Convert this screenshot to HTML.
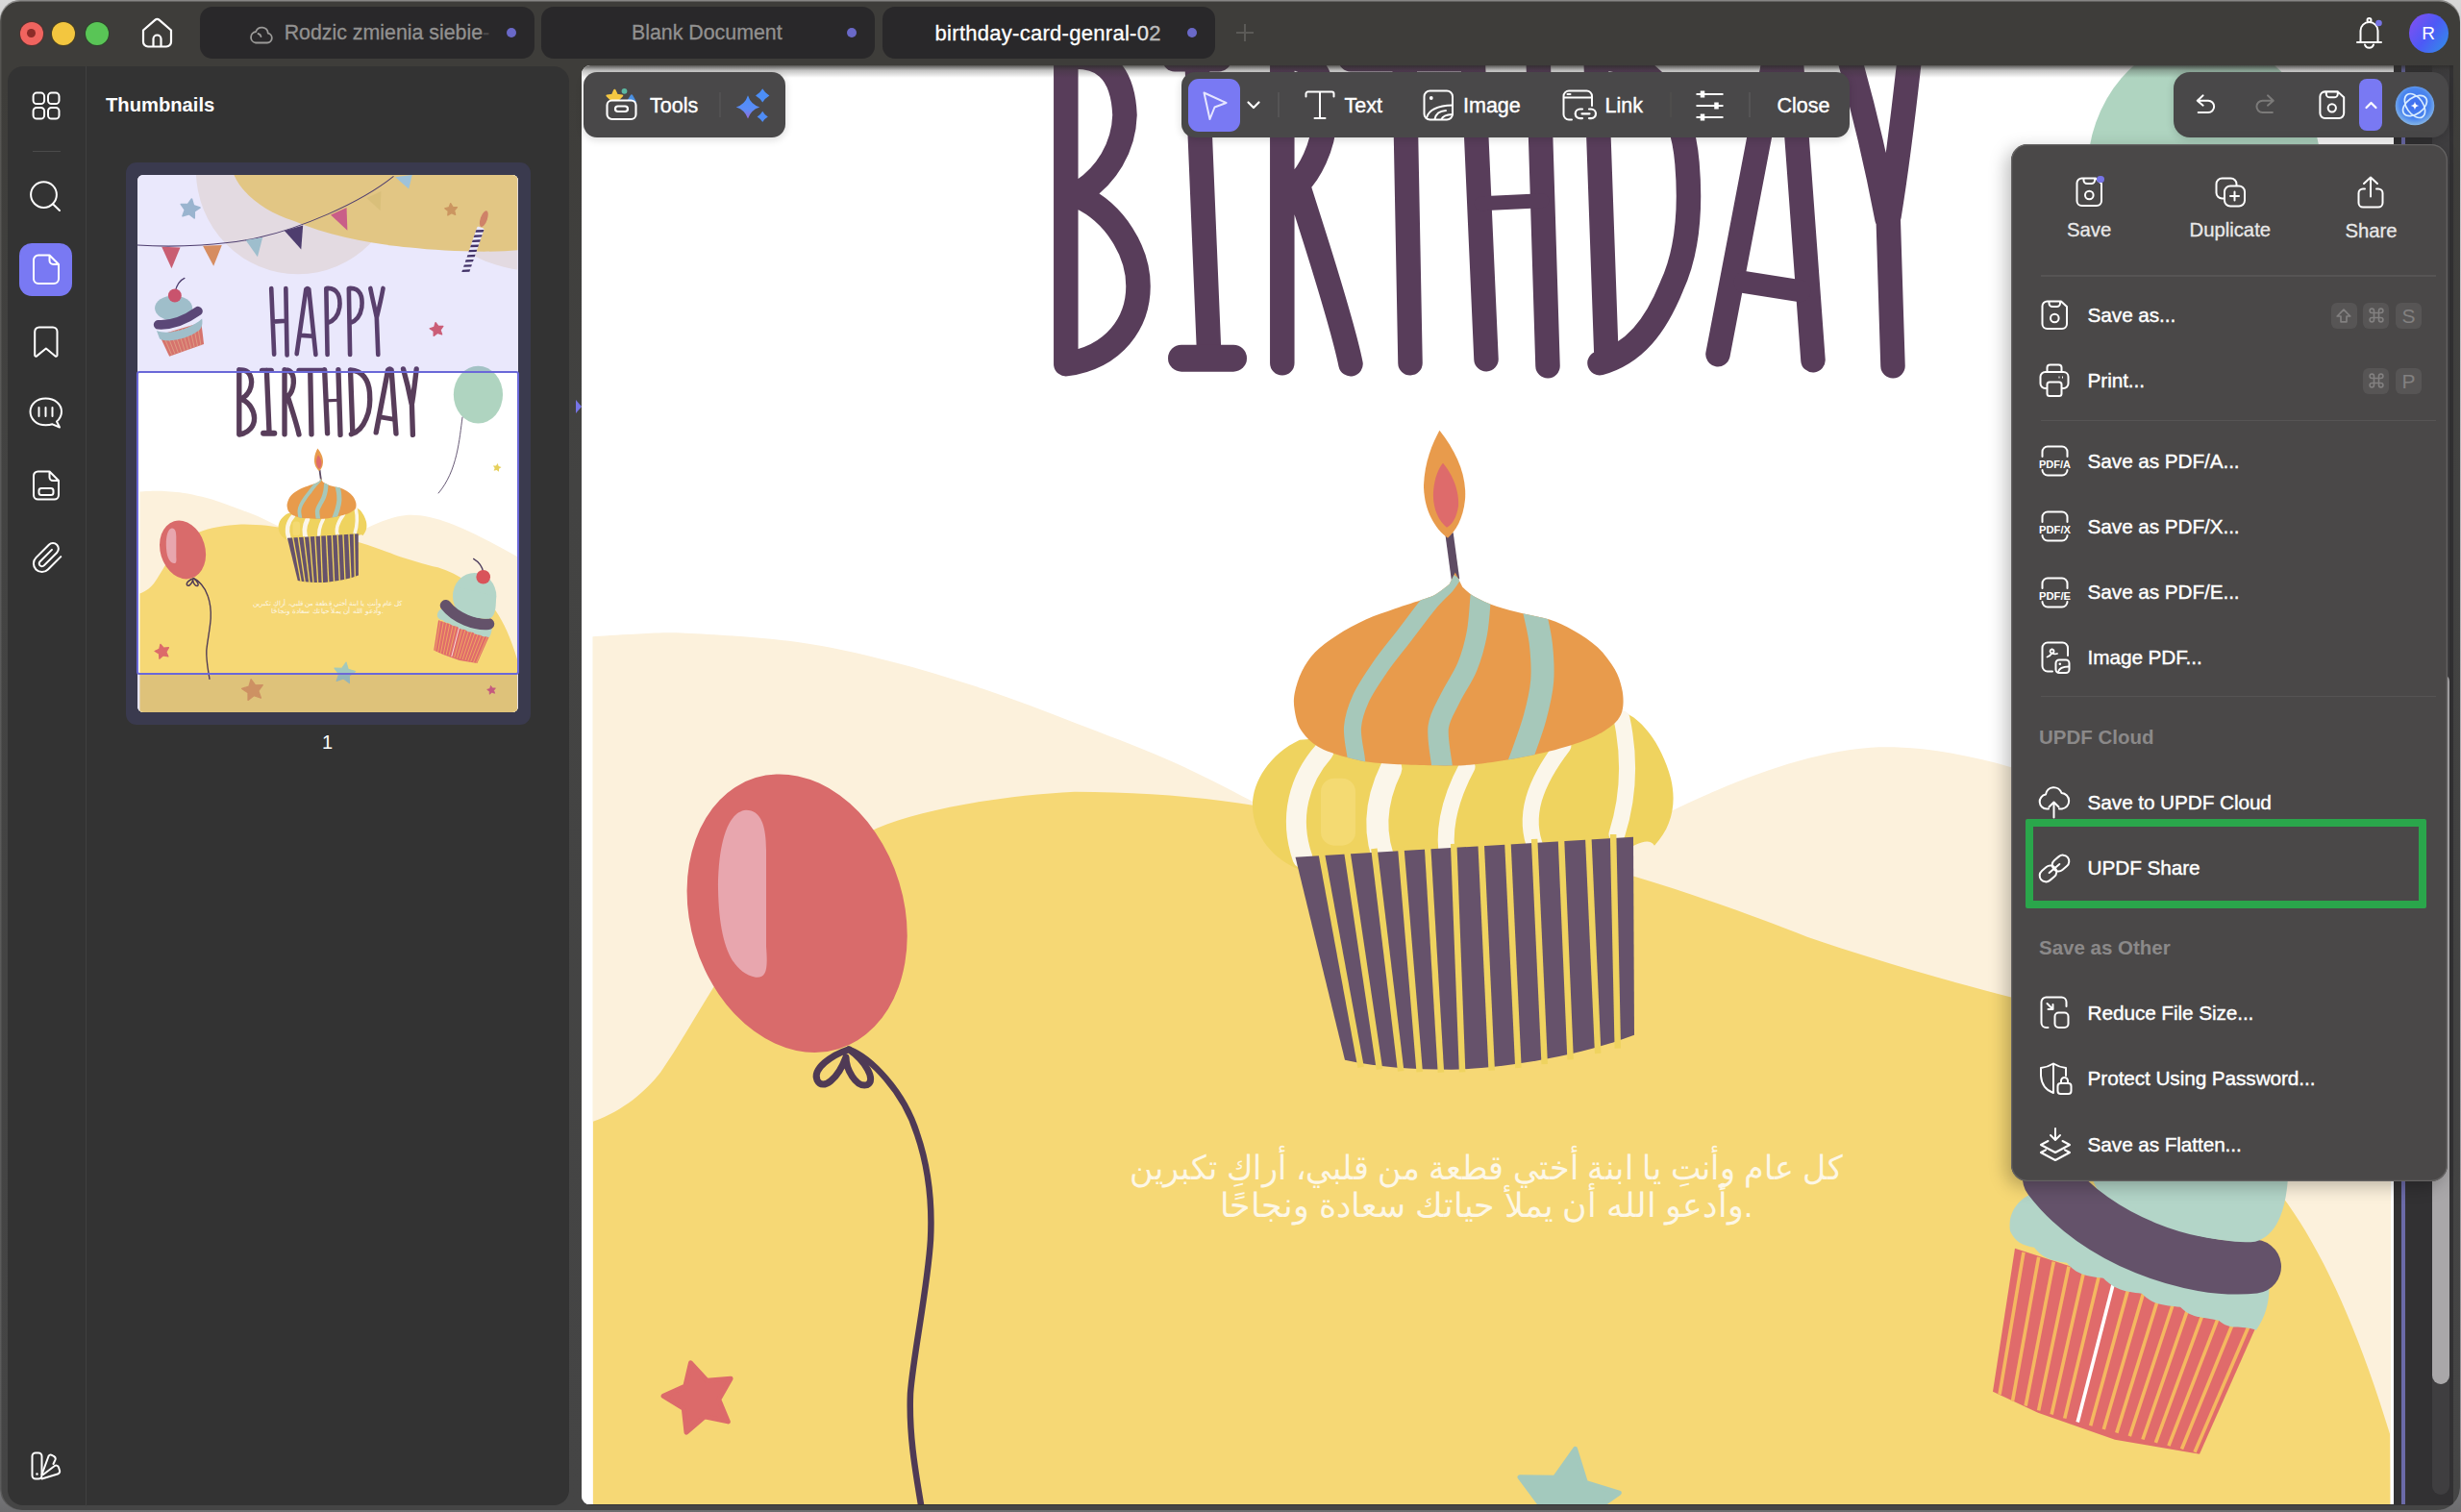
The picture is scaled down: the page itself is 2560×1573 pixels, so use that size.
<!DOCTYPE html>
<html lang="en">
<head>
<meta charset="utf-8">
<title>UPDF - birthday-card-genral-02</title>
<style>
*{box-sizing:border-box;margin:0;padding:0}
html,body{width:2560px;height:1573px;overflow:hidden;background:linear-gradient(#d8d8d8 0,#cfcfd2 40px,#8f8f93 1500px,#6c6c6e 1573px);font-family:"Liberation Sans",sans-serif;}
#win{position:absolute;left:0;top:0;width:2559px;height:1570.5px;background:linear-gradient(#3e3d3a 0,#3e3d3a 90px,#434342 500px,#454545 1573px);border-radius:21px 22px 24px 22px;overflow:hidden;box-shadow:inset 0 1.5px 0 rgba(255,255,255,.38), inset 1.5px 0 0 rgba(255,255,255,.12)}
.abs{position:absolute}
i{display:block}
svg{position:absolute;overflow:visible}
.ic{fill:none;stroke:#fff;stroke-width:2;stroke-linecap:round;stroke-linejoin:round}
.tl{position:absolute;top:22.6px;width:24px;height:24px;border-radius:50%}
.tab{position:absolute;top:7px;height:54px;border-radius:13px;background:#29282a;color:#929190;font-size:21.35px;line-height:55.5px;-webkit-text-stroke:.3px #929190;white-space:nowrap}
.tab .dot{position:absolute;top:22px;width:10px;height:10px;border-radius:50%;background:#6a69c8}
.tab span.t{position:absolute;top:0}
#side{position:absolute;left:8px;top:68.5px;width:584.3px;height:1497px;background:#333333;border-radius:16px}
#doc{position:absolute;left:605px;top:68px;width:1947px;height:1498px;background:#323133;overflow:hidden;border-radius:9px 0 0 10px}
#page{position:absolute;left:0;top:0;width:1885px;height:1497px;background:#fff;overflow:hidden}
.tb{position:absolute;background:#494849;border-radius:14px;box-shadow:0 2px 8px rgba(0,0,0,.16)}
.tbt{position:absolute;color:#fff;font-size:21.5px;line-height:28px;white-space:nowrap;-webkit-text-stroke:.4px #fff}
#dd{position:absolute;left:2092px;top:150px;width:454px;height:1079px;background:#4a4848;border-radius:17px;box-shadow:0 0 0 1.3px #646262 inset, -5px 5px 18px rgba(0,0,0,.26)}
.mi{position:absolute;left:79.6px;color:#fff;font-size:20.8px;letter-spacing:-.1px;line-height:28px;white-space:nowrap;-webkit-text-stroke:.4px #fff}
.mh{position:absolute;left:29px;color:#8b8989;font-size:20.5px;font-weight:bold;line-height:28px;white-space:nowrap}
.sep{position:absolute;left:31px;width:411px;height:1.5px;background:#565454}
.key{position:absolute;width:27px;height:27px;border-radius:6px;background:#575555;color:#828080;font-size:21px;line-height:27px;text-align:center}
.top3{position:absolute;width:140px;text-align:center;color:#e9e8e8;font-size:20.3px;line-height:26px;white-space:nowrap;-webkit-text-stroke:.3px #e9e8e8}
</style>
</head>
<body>
<svg width="0" height="0" style="position:absolute"><defs><symbol id="card" viewBox="605 -906.7 1885 2663" preserveAspectRatio="none">
<rect x="605" y="-907" width="1885" height="2664" fill="#fff"/>
<ellipse cx="1400" cy="-930" rx="505" ry="515" fill="#f7efe0"/>
<path d="M2248 -520 C2330 -470 2420 -450 2490 -436 V-907 H2200 Z" fill="#f7efe0"/>
<path d="M1083 -907 C1130 -800 1250 -720 1375 -680 C1560 -600 1800 -560 1957 -547 C2100 -530 2350 -520 2490 -534 V-907 Z" fill="#f6d875"/>
<path d="M605 -559 C800 -545 1050 -560 1208 -597 C1400 -640 1700 -760 1874 -900" fill="none" stroke="#4b3a5c" stroke-width="5"/>
<polygon points="725,-551 817,-547 774,-443" fill="#d96060"/>
<polygon points="929,-555 1023,-559 982,-455" fill="#e8964c"/>
<polygon points="1141,-584 1225,-597 1200,-501" fill="#a8cfc9"/>
<polygon points="1333,-630 1425,-657 1416,-538" fill="#4b3a5c"/>
<polygon points="1562,-709 1641,-745 1645,-632" fill="#d9607a"/>
<polygon points="1740,-792 1812,-826 1808,-730" fill="#ecd06a"/>
<polygon points="1882,-896 1966,-907 1949,-838" fill="#a8d4d8"/>
<polygon points="873.7,-787.2 883.0,-755.4 914.5,-745.0 887.1,-726.3 886.9,-693.1 860.7,-713.4 829.0,-703.3 840.2,-734.5 820.9,-761.5 854.0,-760.5" fill="#a3c3cb" stroke="#a3c3cb" stroke-width="8" stroke-linejoin="round"/>
<polygon points="2156.2,-765.9 2167.2,-747.7 2188.5,-746.5 2174.6,-730.4 2180.0,-709.8 2160.4,-718.1 2142.5,-706.6 2144.3,-727.7 2127.8,-741.2 2148.5,-746.1" fill="#dca04c" stroke="#dca04c" stroke-width="6" stroke-linejoin="round"/>
<polygon points="2081.9,-175.5 2095.7,-156.7 2118.9,-157.4 2105.3,-138.6 2113.2,-116.7 2091.0,-123.8 2072.7,-109.5 2072.5,-132.8 2053.3,-145.9 2075.4,-153.2" fill="#dc5f66" stroke="#dc5f66" stroke-width="6" stroke-linejoin="round"/>
<g transform="translate(2269,-538) rotate(19)"><rect x="-18" y="-115" width="36" height="230" rx="6" fill="#fff"/><path d="M-18 -95 L18 -109 V-97 L-18 -83 Z" fill="#3f2f55"/><path d="M-18 -69 L18 -83 V-71 L-18 -57 Z" fill="#3f2f55"/><path d="M-18 -43 L18 -57 V-45 L-18 -31 Z" fill="#3f2f55"/><path d="M-18 -17 L18 -31 V-19 L-18 -5 Z" fill="#3f2f55"/><path d="M-18 9 L18 -5 V7 L-18 21 Z" fill="#3f2f55"/><path d="M-18 35 L18 21 V33 L-18 47 Z" fill="#3f2f55"/><path d="M-18 61 L18 47 V59 L-18 73 Z" fill="#3f2f55"/><path d="M-18 87 L18 73 V85 L-18 99 Z" fill="#3f2f55"/><path d="M-18 113 L18 99 V111 L-18 125 Z" fill="#3f2f55"/><ellipse cx="0" cy="-160" rx="17" ry="42" fill="#e08a55"/></g>
<path d="M792 -330 C800 -360 815 -385 838 -395" fill="none" stroke="#4b3a5c" stroke-width="6" stroke-linecap="round"/>
<polygon points="713,-114 921,-176 934,-68 763,-8" fill="#e8795a"/>
<line x1="730" y1="-119" x2="775" y2="-14" stroke="#f2b07a" stroke-width="4"/><line x1="749" y1="-124" x2="791" y2="-19" stroke="#f2b07a" stroke-width="4"/><line x1="768" y1="-130" x2="807" y2="-25" stroke="#f2b07a" stroke-width="4"/><line x1="787" y1="-135" x2="823" y2="-30" stroke="#f2b07a" stroke-width="4"/><line x1="806" y1="-141" x2="839" y2="-36" stroke="#f2b07a" stroke-width="4"/><line x1="825" y1="-147" x2="855" y2="-41" stroke="#f2b07a" stroke-width="4"/><line x1="844" y1="-152" x2="871" y2="-47" stroke="#f2b07a" stroke-width="4"/><line x1="863" y1="-158" x2="887" y2="-52" stroke="#f2b07a" stroke-width="4"/><line x1="882" y1="-163" x2="903" y2="-58" stroke="#f2b07a" stroke-width="4"/><line x1="901" y1="-169" x2="919" y2="-63" stroke="#f2b07a" stroke-width="4"/>
<path d="M700 -135 C760 -110 880 -150 925 -195 C930 -160 920 -140 900 -130 C860 -100 760 -70 715 -95 Z" fill="#a9cfc6"/>
<ellipse cx="784" cy="-247" rx="93" ry="62" fill="#a9cfc6"/>
<path d="M708 -165 C790 -160 860 -200 905 -232" fill="none" stroke="#5a4666" stroke-width="46" stroke-linecap="round"/>
<circle cx="790" cy="-309" r="33" fill="#d9545a"/>
<g fill="none" stroke="#583d5a" stroke-width="22" stroke-linecap="round" stroke-linejoin="round">
<path d="M1268 -345 L1282 -18 M1340 -345 L1346 -14 M1275 -180 L1343 -184"/>
<path d="M1394 -20 L1440 -340 Q1447 -348 1454 -340 L1488 -16 M1418 -112 L1474 -108"/>
<path d="M1546 -16 L1540 -345 C1600 -350 1612 -300 1606 -250 C1598 -200 1570 -180 1544 -172"/>
<path d="M1658 -16 L1652 -345 C1712 -350 1722 -300 1716 -250 C1708 -200 1682 -180 1656 -172"/>
<path d="M1759 -345 C1770 -290 1782 -240 1790 -200 M1822 -345 C1812 -290 1800 -240 1790 -200 L1797 -16"/>
</g>
<ellipse cx="2293" cy="182" rx="122" ry="142" fill="#afd4c0"/>
<path d="M2215 292 C2200 400 2190 560 2095 671" fill="none" stroke="#4b3a5c" stroke-width="4"/>
<polygon points="2389.8,522.3 2393.9,536.4 2407.8,540.9 2395.7,549.2 2395.6,563.8 2384.1,554.8 2370.2,559.3 2375.1,545.5 2366.6,533.7 2381.2,534.1" fill="#e6d05c"/>
<path d="M616.5 662.5 C623.8 662.1 643.8 660.6 660.0 660.0 C676.2 659.4 686.0 657.7 714.0 659.0 C742.0 660.3 792.8 663.2 828.0 668.0 C863.2 672.8 892.5 679.8 925.0 688.0 C957.5 696.2 990.5 706.2 1023.0 717.0 C1055.5 727.8 1087.5 740.5 1120.0 753.0 C1152.5 765.5 1188.2 778.8 1218.0 792.0 C1247.8 805.2 1278.7 821.3 1299.0 832.0 C1319.3 842.7 1333.2 852.0 1340.0 856.0 L1690 868 C1740 843 1850 785 1946 778 C2100 770 2300 880 2490 986 V1757 H616.5 Z" fill="#fcf1dc"/>
<path d="M617 1167 C650 1155 672 1135 687 1116 C705 1090 725 1055 740 1031 C790 950 850 890 912 862 C960 842 1040 828 1118 824 C1200 824 1280 832 1340 845 L1700 912 C1760 930 1830 955 1880 975 C1950 999 2030 1022 2093 1038 C2220 1075 2320 1170 2380 1253 C2420 1310 2455 1390 2486 1492 L2487 1757 H617 Z" fill="#f6d875"/>
<rect x="2487" y="-907" width="3" height="2664" fill="#fff"/>
<g fill="none" stroke="#583d5a" stroke-width="25.5" stroke-linecap="round" stroke-linejoin="round">
<path d="M1108.8 58 V378 M1108.8 60 C1145 56 1168 72 1170 120 C1169 155 1150 183 1126 199 M1123 205 C1160 222 1184 262 1184 298 C1184 335 1160 372 1108.8 379"/>
<path d="M1245 62 L1257.6 366"/><path d="M1229 373 H1283" stroke-width="28"/><path d="M1222 62 H1268"/>
<path d="M1333.8 58 V378 M1334 60 C1372 58 1380 90 1378 125 C1376 155 1362 180 1350 192 C1365 240 1395 330 1405 379"/>
<path d="M1461 62 L1467 378 M1405 62 H1520"/>
<path d="M1532 58 L1546 374 M1600 58 L1610 381"/><path d="M1541 212 L1604 209" stroke-width="15"/>
<path d="M1660 60 L1671 372 M1660 60 C1720 62 1750 110 1755 170 C1760 230 1752 270 1739 298 C1722 340 1700 368 1664 378"/>
<path d="M1787 369 L1846 60 Q1855 52 1863 60 L1886 375"/><path d="M1815 294 L1872 303" stroke-width="23"/>
<path d="M1922 55 C1935 100 1951 165 1963 228 M1987 55 C1981 110 1974 170 1965 225 M1963.5 205 L1969 381"/>
</g>
<path d="M883 1092 C905 1100 940 1135 954 1180 C966 1215 970 1250 968 1290 C965 1340 950 1410 947 1450 C945 1500 955 1545 962 1590" fill="none" stroke="#4f3a55" stroke-width="6.5" stroke-linecap="round"/>
<path d="M883 1092 C865 1098 845 1112 850 1124 C856 1136 872 1122 880 1100 C880 1112 890 1132 902 1129 C912 1124 900 1104 883 1092 Z" fill="none" stroke="#4f3a55" stroke-width="7" stroke-linejoin="round"/>
<ellipse cx="829" cy="950.5" rx="111" ry="147.5" transform="rotate(-17 829 950)" fill="#d96b6b"/>
<path d="M776 843 C792 843 797 860 797 885 V985 C799 1010 797 1018 786 1017 C760 1012 748 980 747 925 C747 880 756 845 776 843 Z" fill="#e8a6ae"/>
<polygon points="718.5,1418.2 735.3,1436.6 760.1,1434.6 747.7,1456.2 757.3,1479.2 732.9,1474.1 714.0,1490.3 711.3,1465.6 690.1,1452.6 712.8,1442.4" fill="#dc6a6a" stroke="#dc6a6a" stroke-width="5" stroke-linejoin="round"/>
<polygon points="1638.6,1507.7 1649.4,1542.6 1684.3,1553.4 1654.5,1574.5 1655.0,1611.0 1625.7,1589.2 1591.1,1600.9 1602.8,1566.3 1581.0,1537.0 1617.5,1537.5" fill="#a3c9bd" stroke="#a3c9bd" stroke-width="5" stroke-linejoin="round"/>
<polygon points="1167.4,1591.8 1189.1,1621.3 1225.6,1620.2 1204.2,1649.8 1216.6,1684.2 1181.8,1673.1 1152.9,1695.4 1152.7,1658.9 1122.5,1638.3 1157.2,1626.9" fill="#e3a05a" stroke="#e3a05a" stroke-width="6" stroke-linejoin="round"/>
<polygon points="2355.2,1624.3 2363.8,1636.1 2378.4,1635.7 2369.9,1647.5 2374.8,1661.3 2360.9,1656.8 2349.4,1665.8 2349.3,1651.2 2337.2,1642.9 2351.1,1638.4" fill="#d9607a" stroke="#d9607a" stroke-width="4" stroke-linejoin="round"/>
<path d="M1507.5 555 L1514 603" stroke="#5e4b63" stroke-width="8.5" fill="none"/>
<path d="M1497.4 448 C1515 470 1526 495 1524 520 C1522 540 1514 553 1506 560 C1492 550 1481 530 1481 505 C1482 480 1490 462 1497.4 448 Z" fill="#e89b4c"/>
<path d="M1501 482 C1512 495 1518 512 1517 527 C1515 540 1510 546 1505 549 C1496 542 1490 528 1491 512 C1492 498 1496 488 1501 482 Z" fill="#de6b6b"/>
<path d="M1352 770 C1320 785 1302 815 1303 840 C1304 870 1325 895 1352 905 L1690 885 C1700 880 1715 870 1721 880 C1740 860 1744 835 1738 810 C1730 780 1712 752 1693 743 Z" fill="#efd35f"/>
<rect x="1374" y="810" width="36" height="70" rx="14" fill="#f4da72"/>
<g fill="none" stroke="#fbf6ea" stroke-linecap="round">
<path d="M1377 782 C1352 810 1340 850 1355 893" stroke-width="21"/>
<path d="M1447 800 C1430 835 1428 870 1443 903" stroke-width="23"/>
<path d="M1526 798 C1506 835 1500 870 1507 898" stroke-width="17"/>
<path d="M1626 776 C1596 815 1584 850 1598 884" stroke-width="17"/>
<path d="M1687 748 C1696 790 1694 830 1682 868" stroke-width="17"/>
</g>
<path d="M1347.5 892 L1699 871 L1700 1077 C1640 1100 1560 1112 1510 1113 C1470 1113 1430 1110 1399 1103 Z" fill="#66526b"/>
<line x1="1374.4" y1="886.4" x2="1415.6" y2="1110.7" stroke="#efd35f" stroke-width="6.5"/>
<line x1="1401.1" y1="884.8" x2="1435.0" y2="1112.8" stroke="#efd35f" stroke-width="6.5"/>
<line x1="1429.4" y1="883.1" x2="1457.2" y2="1114.6" stroke="#efd35f" stroke-width="6.5"/>
<line x1="1457.2" y1="881.4" x2="1476.7" y2="1115.6" stroke="#efd35f" stroke-width="6.5"/>
<line x1="1485.0" y1="879.8" x2="1498.9" y2="1116.0" stroke="#efd35f" stroke-width="6.5"/>
<line x1="1512.2" y1="878.2" x2="1521.1" y2="1115.7" stroke="#efd35f" stroke-width="6.5"/>
<line x1="1540.6" y1="876.5" x2="1551.7" y2="1114.0" stroke="#efd35f" stroke-width="6.5"/>
<line x1="1568.3" y1="874.8" x2="1579.4" y2="1111.3" stroke="#efd35f" stroke-width="6.5"/>
<line x1="1596.1" y1="873.1" x2="1606.7" y2="1107.5" stroke="#efd35f" stroke-width="6.5"/>
<line x1="1623.9" y1="871.5" x2="1633.6" y2="1102.6" stroke="#efd35f" stroke-width="6.5"/>
<line x1="1652.2" y1="869.8" x2="1662.2" y2="1096.3" stroke="#efd35f" stroke-width="6.5"/>
<line x1="1678.1" y1="868.3" x2="1682.8" y2="1090.9" stroke="#efd35f" stroke-width="6.5"/>
<clipPath id="domeclip"><path d="M1513.8 595.9 L1521.3 611.0 C1523.4 612.7 1528.0 617.7 1533.9 621.0 C1539.8 624.3 1548.1 628.1 1556.5 631.0 C1564.9 633.9 1574.9 636.3 1584.1 638.6 C1593.3 640.9 1603.0 642.0 1611.8 644.9 C1620.6 647.8 1628.5 651.4 1636.9 656.2 C1645.3 661.0 1654.9 667.1 1662.0 673.8 C1669.1 680.5 1675.4 689.3 1679.6 696.4 C1683.8 703.5 1685.6 710.2 1687.1 716.5 C1688.6 722.8 1688.8 729.1 1688.4 734.1 C1688.0 739.1 1686.9 742.8 1684.6 746.6 C1682.3 750.4 1680.0 752.9 1674.6 756.7 C1669.2 760.5 1662.5 765.0 1652.0 769.2 C1641.5 773.4 1626.9 778.0 1611.8 781.8 C1596.7 785.6 1578.2 789.4 1561.5 791.9 C1544.8 794.4 1532.2 796.5 1511.3 796.9 C1490.4 797.3 1454.3 795.9 1435.9 794.4 C1417.5 792.9 1411.6 791.0 1400.7 788.1 C1389.8 785.2 1378.5 781.6 1370.6 776.8 C1362.6 772.0 1357.0 765.5 1353.0 759.2 C1349.0 752.9 1347.8 745.4 1346.7 739.1 C1345.7 732.8 1345.5 728.2 1346.7 721.5 C1348.0 714.8 1350.7 706.0 1354.2 698.9 C1357.8 691.8 1361.9 685.1 1368.0 678.8 C1374.1 672.5 1381.9 666.9 1390.7 661.2 C1399.5 655.6 1410.8 649.5 1420.8 644.9 C1430.8 640.3 1441.0 637.2 1451.0 633.6 C1461.0 630.0 1474.0 626.0 1481.1 623.5 C1488.2 621.0 1489.3 621.0 1493.7 618.5 C1498.1 616.0 1505.2 610.1 1507.5 608.4 Z"/></clipPath>
<path d="M1513.8 595.9 L1521.3 611.0 C1523.4 612.7 1528.0 617.7 1533.9 621.0 C1539.8 624.3 1548.1 628.1 1556.5 631.0 C1564.9 633.9 1574.9 636.3 1584.1 638.6 C1593.3 640.9 1603.0 642.0 1611.8 644.9 C1620.6 647.8 1628.5 651.4 1636.9 656.2 C1645.3 661.0 1654.9 667.1 1662.0 673.8 C1669.1 680.5 1675.4 689.3 1679.6 696.4 C1683.8 703.5 1685.6 710.2 1687.1 716.5 C1688.6 722.8 1688.8 729.1 1688.4 734.1 C1688.0 739.1 1686.9 742.8 1684.6 746.6 C1682.3 750.4 1680.0 752.9 1674.6 756.7 C1669.2 760.5 1662.5 765.0 1652.0 769.2 C1641.5 773.4 1626.9 778.0 1611.8 781.8 C1596.7 785.6 1578.2 789.4 1561.5 791.9 C1544.8 794.4 1532.2 796.5 1511.3 796.9 C1490.4 797.3 1454.3 795.9 1435.9 794.4 C1417.5 792.9 1411.6 791.0 1400.7 788.1 C1389.8 785.2 1378.5 781.6 1370.6 776.8 C1362.6 772.0 1357.0 765.5 1353.0 759.2 C1349.0 752.9 1347.8 745.4 1346.7 739.1 C1345.7 732.8 1345.5 728.2 1346.7 721.5 C1348.0 714.8 1350.7 706.0 1354.2 698.9 C1357.8 691.8 1361.9 685.1 1368.0 678.8 C1374.1 672.5 1381.9 666.9 1390.7 661.2 C1399.5 655.6 1410.8 649.5 1420.8 644.9 C1430.8 640.3 1441.0 637.2 1451.0 633.6 C1461.0 630.0 1474.0 626.0 1481.1 623.5 C1488.2 621.0 1489.3 621.0 1493.7 618.5 C1498.1 616.0 1505.2 610.1 1507.5 608.4 Z" fill="#e89b4c"/>
<g fill="none" stroke="#a6c8ba" clip-path="url(#domeclip)">
<path d="M1512.0 598.0 C1510.8 599.7 1509.3 603.3 1505.0 608.4 C1500.7 613.5 1493.4 619.7 1486.1 628.5 C1478.8 637.3 1469.4 650.3 1461.0 661.2 C1452.6 672.1 1443.4 683.0 1435.9 693.9 C1428.4 704.8 1420.6 716.0 1415.8 726.5 C1411.0 737.0 1407.8 746.2 1407.0 756.7 C1406.2 767.2 1409.8 781.2 1410.8 789.3 C1411.8 797.3 1412.6 802.4 1413.0 805.0" stroke-width="18"/>
<path d="M1541.0 605.0 C1540.9 607.7 1541.0 612.0 1540.2 621.0 C1539.4 630.0 1538.7 646.6 1536.4 658.7 C1534.1 670.9 1530.9 682.6 1526.3 693.9 C1521.7 705.2 1513.7 716.0 1508.7 726.5 C1503.7 737.0 1497.7 745.0 1496.2 756.7 C1494.8 768.4 1499.0 788.0 1500.0 796.9 C1501.0 805.8 1501.7 807.8 1502.0 810.0" stroke-width="21.5"/>
<path d="M1592.0 620.0 C1592.8 623.1 1594.9 630.1 1596.7 638.6 C1598.5 647.1 1601.8 659.6 1603.0 671.3 C1604.2 683.0 1605.2 696.3 1604.2 708.9 C1603.2 721.5 1600.1 734.0 1596.7 746.6 C1593.3 759.2 1587.2 775.4 1584.1 784.3 C1581.0 793.2 1579.0 797.4 1578.0 800.0" stroke-width="24"/>
</g>
<path d="M2318 1060 C2312 1030 2295 1010 2270 995" fill="none" stroke="#4b3a5c" stroke-width="6" stroke-linecap="round"/>
<polygon points="2096,1299 2347,1380 2288,1513 2200,1498 2120,1470 2073,1448" fill="#e06b6b"/>
<line x1="2105.0" y1="1303.0" x2="2080.0" y2="1451.0" stroke="#f4b860" stroke-width="3.6"/>
<line x1="2120.7" y1="1308.0" x2="2093.5" y2="1457.9" stroke="#f4b860" stroke-width="3.6"/>
<line x1="2136.3" y1="1313.0" x2="2107.1" y2="1463.0" stroke="#f4b860" stroke-width="3.6"/>
<line x1="2152.0" y1="1318.0" x2="2120.6" y2="1467.6" stroke="#f4b860" stroke-width="3.6"/>
<line x1="2167.7" y1="1323.0" x2="2134.1" y2="1471.8" stroke="#f4b860" stroke-width="3.6"/>
<line x1="2183.3" y1="1328.0" x2="2147.7" y2="1475.9" stroke="#f4b860" stroke-width="3.6"/>
<line x1="2199.0" y1="1333.0" x2="2161.2" y2="1479.8" stroke="#fff" stroke-width="3.6"/>
<line x1="2214.7" y1="1338.0" x2="2174.7" y2="1483.6" stroke="#f4b860" stroke-width="3.6"/>
<line x1="2230.3" y1="1343.0" x2="2188.3" y2="1487.3" stroke="#f4b860" stroke-width="3.6"/>
<line x1="2246.0" y1="1348.0" x2="2201.8" y2="1490.9" stroke="#f4b860" stroke-width="3.6"/>
<line x1="2261.7" y1="1353.0" x2="2215.3" y2="1494.4" stroke="#f4b860" stroke-width="3.6"/>
<line x1="2277.3" y1="1358.0" x2="2228.9" y2="1497.8" stroke="#f4b860" stroke-width="3.6"/>
<line x1="2293.0" y1="1363.0" x2="2242.4" y2="1501.2" stroke="#f4b860" stroke-width="3.6"/>
<line x1="2308.7" y1="1368.0" x2="2255.9" y2="1504.5" stroke="#f4b860" stroke-width="3.6"/>
<line x1="2324.3" y1="1373.0" x2="2269.5" y2="1507.8" stroke="#f4b860" stroke-width="3.6"/>
<line x1="2340.0" y1="1378.0" x2="2283.0" y2="1511.0" stroke="#f4b860" stroke-width="3.6"/>
<path d="M2091 1281 C2088 1262 2100 1245 2120 1240 L2360 1330 C2362 1350 2358 1368 2347 1384 C2330 1378 2320 1385 2308 1374 C2290 1370 2280 1372 2268 1360 C2250 1358 2240 1358 2228 1346 C2210 1344 2200 1342 2188 1330 C2170 1328 2160 1326 2150 1314 C2132 1312 2124 1308 2116 1298 C2104 1296 2096 1292 2091 1281 Z" fill="#b3d5c8"/>
<ellipse cx="2275" cy="1180" rx="108" ry="115" fill="#b3d5c8"/>
<path d="M2132 1226 C2180 1290 2280 1325 2345 1318" fill="none" stroke="#64526a" stroke-width="56" stroke-linecap="round"/>
<path d="M2176 1130 C2176 1200 2200 1250 2234 1266 C2270 1285 2320 1295 2346 1292 C2372 1285 2384 1250 2380 1180 Z" fill="#b3d5c8"/>
<circle cx="2318" cy="1085" r="35" fill="#d9545a"/>
<g font-family="Liberation Sans, sans-serif" font-size="35" fill="#fdf7e6" text-anchor="middle"><text x="1546" y="1227" textLength="742" lengthAdjust="spacingAndGlyphs">كل عام وأنتِ يا ابنة أختي قطعة من قلبي، أراكِ تكبرين</text><text x="1546" y="1266" textLength="555" lengthAdjust="spacingAndGlyphs">وأدعو الله أن يملأ حياتك سعادة ونجاحًا.</text></g>
</symbol></defs></svg>
<div id="win">
<div class="tl" style="left:20.5px;background:#f0645f;box-shadow:0 0 0 1px rgba(120,30,30,.35)"><i class="abs" style="left:7.5px;top:7.5px;width:9px;height:9px;border-radius:50%;background:#8c2b28"></i></div>
<div class="tl" style="left:54.3px;background:#f3c63f;box-shadow:0 0 0 1px rgba(90,70,0,.4)"></div>
<div class="tl" style="left:88.6px;background:#59c556;box-shadow:0 0 0 1px rgba(20,80,20,.35)"></div>
<svg style="left:147px;top:18px" width="33" height="32" viewBox="0 0 33 32"><path class="ic" style="stroke-width:2.2" d="M2 13.5 L14.200 2.800 a3.5 3.5 0 0 1 4.600 0 L31 13.5 V25.5 a5 5 0 0 1 -5 5 H7 a5 5 0 0 1 -5 -5 Z M12.5 30.5 V22.5 a4 4 0 0 1 8 0 V30.5"/></svg>
<div class="tab" style="left:208px;width:348px"><svg style="left:51px;top:17.5px" width="26" height="21" viewBox="0 0 26 21"><path class="ic" style="stroke:#9b9a98;stroke-width:1.8" d="M7 19.5 H19 a5 5 0 0 0 .8 -9.9 a6.5 6.5 0 0 0 -12.6 -1.6 A5.800 5.800 0 0 0 7 19.5 Z M9.5 10 a4 4 0 0 1 3 3"/></svg><span class="t" id="t1" style="left:87.7px">Rodzic zmienia siebie<span style="opacity:.3">-</span></span><i class="dot" style="left:318.5px"></i></div>
<div class="tab" style="left:563px;width:347px"><span class="t" id="t2" style="left:94px">Blank Document</span><i class="dot" style="left:318.3px"></i></div>
<div class="tab" style="left:918px;width:346px;color:#fff;font-size:22px;letter-spacing:.28px;-webkit-text-stroke:.3px #fff"><span class="t" id="t3" style="left:54.6px">birthday-card-genral-<span style="opacity:.88">0</span><span style="opacity:.68">2</span></span><i class="dot" style="left:317.4px"></i></div>
<svg style="left:1285px;top:24px" width="20" height="20" viewBox="0 0 20 20"><path d="M10 1 V19 M1 10 H19" stroke="#5b5a57" stroke-width="2" fill="none"/></svg>
<svg style="left:2450px;top:16px" width="30" height="38" viewBox="0 0 30 38"><path class="ic" d="M2 28 H27 M5.5 28 V16 a9 9 0 0 1 18 0 V28 M10 30.5 a4.7 4.7 0 0 0 9 0"/><circle class="ic" cx="14.5" cy="5" r="2"/><circle cx="24.5" cy="8" r="3.3" fill="#7674e6"/></svg>
<div class="abs" style="left:2505.5px;top:14px;width:41px;height:40.5px;border-radius:50%;background:linear-gradient(125deg,#8250f0 5%,#4d59f6 50%,#2f93e6 100%);color:#fff;font-size:19px;line-height:41px;text-align:center">R</div>
<div id="side"><i class="abs" style="left:80.5px;top:0;width:1.5px;height:1498px;background:#404040"></i>
<svg style="left:25.0px;top:26.0px" width="30" height="30" viewBox="0 0 30 30"><rect class="ic" x="1.6" y="1.6" width="11.5" height="11.5" rx="3.6"/><rect class="ic" x="1.6" y="17" width="11.5" height="11.5" rx="3.6"/><rect class="ic" x="17" y="1.6" width="11.5" height="11.5" rx="3.6"/><rect class="ic" x="17" y="17" width="11.5" height="11.5" rx="3.6"/></svg>
<i class="abs" style="left:25.5px;top:88.0px;width:29px;height:1.5px;background:#4b4b4b"></i>
<svg style="left:22.0px;top:118.5px" width="34" height="34" viewBox="0 0 34 34"><circle class="ic" cx="15.5" cy="15.6" r="13.4"/><path class="ic" d="M25 25.2 L32 32"/></svg>
<i class="abs" style="left:12.3px;top:184.0px;width:55px;height:55.5px;border-radius:13px;background:#7979f3"></i>
<svg style="left:25.0px;top:195.5px" width="30" height="33" viewBox="0 0 30 33"><path class="ic" d="M7 1.5 H18.5 L28 11 V26 a5 5 0 0 1 -5 5 H7 a5 5 0 0 1 -5 -5 V6.5 a5 5 0 0 1 5 -5 Z M18.5 1.5 V7 a4 4 0 0 0 4 4 H28" /></svg>
<svg style="left:26.7px;top:270.3px" width="26" height="34" viewBox="0 0 26 34"><path class="ic" d="M1.2 6 a4.5 4.5 0 0 1 4.5 -4.5 H20 a4.5 4.5 0 0 1 4.500 4.5 V30.500 a1.2 1.2 0 0 1 -2 .9 L12.9 23.500 L3.200 31.400 a1.200 1.200 0 0 1 -2 -.9 Z"/></svg>
<svg style="left:22.0px;top:344.5px" width="36" height="34" viewBox="0 0 36 34"><path class="ic" d="M17.500 1.500 C27 1.500 34 7.500 34 15.300 C34 19.500 32 23 29 25.500 L32 31.500 L24.500 28.300 C22.500 29 20 29.300 17.500 29.300 C8 29.300 1.500 23 1.500 15.300 C1.500 7.500 8 1.500 17.500 1.500 Z M10.500 11 V20 M17.500 11 V20 M24.500 11 V20"/></svg>
<svg style="left:25.0px;top:420.5px" width="30" height="33" viewBox="0 0 30 33"><path class="ic" d="M6.500 1.500 H18.500 L28 11 V26 a4.500 4.500 0 0 1 -4.500 4.500 H6.500 A4.500 4.500 0 0 1 2 26 V6 a4.500 4.500 0 0 1 4.500 -4.500 Z M18.500 1.500 V7.500 a3.500 3.500 0 0 0 3.500 3.500 H28"/><rect class="ic" x="7.500" y="19" width="15" height="7" rx="2.500"/></svg>
<svg style="left:23.6px;top:494.3px" width="35" height="35" viewBox="0 0 24 24"><path class="ic" style="stroke-width:1.4" d="M21.44 11.05l-9.19 9.19a6 6 0 0 1-8.49-8.49l9.190-9.19a4 4 0 0 1 5.66 5.66l-9.200 9.19a2 2 0 0 1-2.83-2.83l8.490-8.48"/></svg>
<svg style="left:24.0px;top:1441.5px" width="32" height="31" viewBox="0 0 32 31"><rect class="ic" x="1.500" y="1.500" width="10" height="27" rx="3.500"/><circle cx="6.500" cy="23.500" r="1.200" fill="#fff"/><path class="ic" d="M11.500 24 L18.500 5 a2.500 2.500 0 0 1 3.400 -1.200 L24 5 a3 3 0 0 1 1.400 3.800 L23.500 13 M11.500 28.500 L28 23.500 a3 3 0 0 0 2 -3.800 L29 16.500 a2.800 2.800 0 0 0 -3.800 -1.700 L13 24"/></svg>
<div class="abs" id="thl" style="left:102px;top:27.5px;color:#fff;font-size:20.2px;font-weight:bold;line-height:26px">Thumbnails</div>
<i class="abs" style="left:122.7px;top:100.5px;width:421px;height:585px;border-radius:11px;background:#3a3a4e"></i>
<div class="abs" style="left:135.1px;top:113.5px;width:395.8px;height:559.2px;border-radius:6px;overflow:hidden;background:#fff"><svg style="left:0;top:0" width="395.8" height="559.2"><use href="#card" width="395.8" height="559.2"/></svg><i class="abs" style="left:0;top:0;width:396px;height:205px;background:rgba(95,85,235,.135)"></i><i class="abs" style="left:0;top:518.5px;width:396px;height:41px;background:rgba(60,50,160,.13)"></i></div>
<i class="abs" style="left:134px;top:317.5px;width:398px;height:316px;border:2px solid #6a68d8;border-radius:3px"></i>
<div class="abs" style="left:322.5px;top:691px;width:20px;text-align:center;color:#fff;font-size:20px;line-height:24px">1</div>
</div>
<svg style="left:598px;top:415px" width="8" height="16" viewBox="0 0 8 16"><path d="M1 1 L7 8 L1 15 Z" fill="#7674e6"/></svg>
<div id="doc"><div id="page"><svg style="left:0;top:-974.7px" width="1885" height="2663"><use href="#card" width="1885" height="2663"/></svg></div>
<i class="abs" style="left:1893px;top:0;width:4px;height:1497px;background:#6b6aa8"></i>
<i class="abs" style="left:1924.5px;top:0;width:18.5px;height:1487px;background:#3f3e40;border-radius:0 0 9px 9px"></i>
<i class="abs" style="left:1924.5px;top:632px;width:18.5px;height:740px;background:#a9a7a9;border-radius:9px"></i>
<i class="abs" style="left:0;top:0;width:1947px;height:13px;background:linear-gradient(rgba(45,44,42,.8) 0%,rgba(50,49,47,.3) 40%,rgba(62,61,58,0) 100%)"></i>
</div>
<div class="tb" style="left:607px;top:75px;width:210px;height:68px"></div>
<svg style="left:629px;top:90px" width="36" height="36" viewBox="0 0 36 36"><path d="M7 4.5 L9.2 9 L14 9.6 L10.5 13 L11.4 17.8 L7 15.5 L2.8 17.8 L3.6 13 L0 9.6 L4.9 9 Z" transform="translate(2.5,-1.2) scale(1.12)" fill="#f5c842" stroke="#f5c842" stroke-width="2" stroke-linejoin="round"/><circle cx="20.5" cy="4.8" r="2.9" fill="#5bb8a2"/><path d="M22.5 16 L27 8.8 Q28 7.6 29 8.8 L33 16 Z" fill="#4a90e2"/><rect x="2.5" y="14.5" width="30" height="19.5" rx="5" fill="#494849" stroke="#fff" stroke-width="2.1"/><path d="M2.5 21 H33" stroke="#fff" stroke-width="0" /><rect x="11" y="20.5" width="13" height="5.5" rx="2.7" fill="none" stroke="#fff" stroke-width="2.2"/></svg>
<div class="tbt" id="tools" style="left:676px;top:96px">Tools</div>
<i class="abs" style="left:748px;top:96px;width:1.5px;height:26px;background:#515051"></i>
<svg style="left:0;top:0" width="10" height="10" viewBox="0 0 10 10"><defs><linearGradient id="spk" x1="0" y1="0" x2="0" y2="1"><stop offset="0" stop-color="#4b8ef8"/><stop offset=".6" stop-color="#5b8cf6"/><stop offset="1" stop-color="#9a6ad8"/></linearGradient></defs><path d="M778.0 99.2 Q780.9 108.5 790.2 111.4 Q780.9 114.3 778.0 123.6 Q775.1 114.3 765.8 111.4 Q775.1 108.5 778.0 99.2 Z" fill="url(#spk)"/><path d="M793.2 92.2 Q795.8 96.8 800.4 99.4 Q795.8 102.0 793.2 106.6 Q790.6 102.0 786.0 99.4 Q790.6 96.8 793.2 92.2 Z" fill="#4c8ef6"/><path d="M793.2 115.8 Q795.2 119.4 798.8 121.4 Q795.2 123.4 793.2 127.0 Q791.2 123.4 787.6 121.4 Q791.2 119.4 793.2 115.8 Z" fill="#4f8cf4"/></svg>
<div class="tb" style="left:1229px;top:75px;width:695px;height:68px"></div>
<i class="abs" style="left:1235.5px;top:81.5px;width:54.5px;height:55px;border-radius:11px;background:#7979f3"></i>
<svg style="left:1249px;top:93px" width="30" height="34" viewBox="0 0 30 34"><path class="ic" style="stroke:#e6e6ff" d="M3.5 3.5 L26.5 14 L14.5 18.5 L9.5 31 Z"/></svg>
<svg style="left:1297px;top:105px" width="14" height="9" viewBox="0 0 14 9"><path class="ic" style="stroke-width:2.2" d="M1.5 1.5 L7 7 L12.5 1.5"/></svg>
<i class="abs" style="left:1329px;top:96px;width:1.5px;height:26px;background:#555455"></i>
<svg style="left:1357px;top:94px" width="32" height="31" viewBox="0 0 32 31"><path class="ic" d="M1.5 6.5 V3.5 a2 2 0 0 1 2 -2 H28.5 a2 2 0 0 1 2 2 V6.5 M16 1.5 V29 M10.5 29 H21.5"/></svg>
<div class="tbt" id="ttext" style="left:1398.5px;top:96px">Text</div>
<svg style="left:1480px;top:93px" width="33" height="33" viewBox="0 0 33 33"><rect class="ic" x="1.5" y="1.5" width="29.5" height="30" rx="6"/><circle cx="8.8" cy="9" r="1.9" fill="#fff"/><path class="ic" d="M4 29.5 C6 22 13 17 31 16.5 M12.5 31 C13.5 25.5 17 22.5 24 22 M19.5 31 C20.5 28 23 26.5 31 26"/></svg>
<div class="tbt" id="timage" style="left:1522px;top:96px">Image</div>
<svg style="left:1624.5px;top:93px" width="36" height="34" viewBox="0 0 36 34"><path class="ic" d="M10 31.5 H7 a5.5 5.5 0 0 1 -5.5 -5.5 V7 A5.5 5.5 0 0 1 7 1.5 H25.5 A5.5 5.5 0 0 1 31 7 V17 M1.5 8.5 H31 M5.5 5 H8.5"/><path class="ic" style="stroke-width:2.2" d="M21 20.5 H18.5 a4.8 4.8 0 0 0 0 9.6 H21 M28 20.5 H30.2 a4.8 4.8 0 0 1 0 9.6 H28 M20.5 25.3 H28.5"/></svg>
<div class="tbt" id="tlink" style="left:1669.5px;top:96px">Link</div>
<i class="abs" style="left:1737px;top:96px;width:1.5px;height:26px;background:#4e4d4c"></i>
<svg style="left:1764px;top:94px" width="30" height="32" viewBox="0 0 30 32"><path class="ic" style="stroke-linecap:butt" d="M0.5 4 H28.5 M0.5 16 H28.5 M0.5 28 H28.5"/><path d="M7 0.5 V7.5 M21.5 12.5 V19.5 M7 24.5 V31.5" stroke="#fff" stroke-width="4.5" fill="none"/></svg>
<i class="abs" style="left:1819px;top:96px;width:1.5px;height:26px;background:#555455"></i>
<div class="tbt" id="tclose" style="left:1848.5px;top:96px">Close</div>
<div class="tb" style="left:2261px;top:75px;width:286px;height:68px;border-radius:17px"></div>
<svg style="left:2284.3px;top:98px" width="21.6" height="20.7" viewBox="0 0 24 23"><path class="ic" style="stroke-width:2.2" d="M8.5 1.5 L2 7.5 L8.5 13 M2.5 7.5 H14.5 a6.8 6.8 0 0 1 0 13.6 H3"/></svg>
<svg style="left:2345.3px;top:98px" width="21.6" height="20.7" viewBox="0 0 24 23"><path class="ic" style="stroke:#7b7a79;stroke-width:2.2" d="M15.5 1.5 L22 7.5 L15.5 13 M21.5 7.5 H9.5 a6.8 6.8 0 0 0 0 13.6 H21"/></svg>
<svg style="left:2411.7px;top:94.3px" width="27.6" height="30.3" viewBox="0 0 30 33"><path class="ic" style="stroke-width:2.2" d="M7 1.5 H21.5 L28.5 8 V26 a5.5 5.5 0 0 1 -5.5 5.5 H7 A5.5 5.5 0 0 1 1.5 26 V7 A5.5 5.5 0 0 1 7 1.5 Z M8.5 1.5 V4 a4 4 0 0 0 4 4 H17.5 a4 4 0 0 0 4 -4 V1.5"/><circle class="ic" style="stroke-width:2.2" cx="15" cy="20" r="4.5"/></svg>
<i class="abs" style="left:2454px;top:82px;width:24px;height:54px;border-radius:8px;background:#7979f3"></i>
<svg style="left:2460px;top:104.5px" width="13" height="9" viewBox="0 0 13 9"><path class="ic" style="stroke-width:2.2" d="M1.5 7 L6.5 2 L11.5 7"/></svg>
<svg style="left:2491px;top:88.5px" width="42" height="42" viewBox="0 0 42 42"><defs><radialGradient id="orb" cx=".5" cy=".45" r=".55"><stop offset="0" stop-color="#3f6cf0"/><stop offset=".7" stop-color="#4a86ee"/><stop offset="1" stop-color="#86b6e6"/></radialGradient></defs><circle cx="21" cy="21" r="20.3" fill="url(#orb)"/><g fill="none" stroke="#d8ecff" stroke-width="1.7"><ellipse cx="21" cy="21" rx="14" ry="8.5" transform="rotate(-35 21 21)"/><ellipse cx="21" cy="21" rx="14" ry="8.5" transform="rotate(55 21 21)"/></g><path d="M21 16.5 C21.6 19.5 22.5 20.4 25.5 21 C22.5 21.6 21.6 22.5 21 25.5 C20.4 22.5 19.5 21.6 16.5 21 C19.5 20.4 20.4 19.5 21 16.5 Z" fill="#fff"/></svg>
<div id="dd">
<svg style="left:66.5px;top:33.5px" width="29" height="32" viewBox="0 0 29 32"><path class="ic" d="M6.5 1.5 H21 L27 7 V25 a5 5 0 0 1 -5 5 H6.5 a5 5 0 0 1 -5 -5 V6.5 a5 5 0 0 1 5 -5 Z M8.5 1.5 V3.5 a3.5 3.5 0 0 0 3.5 3.5 H16.5 a3.5 3.5 0 0 0 3.5 -3.5 V1.5"/><circle class="ic" cx="14.3" cy="19" r="4.3"/></svg>
<i class="abs" style="left:89.2px;top:32.5px;width:7.5px;height:7.5px;border-radius:50%;background:#7674e6"></i>
<div class="top3" style="left:11.1px;top:76.0px"><span id="dsave">Save</span></div>
<svg style="left:211.5px;top:34.0px" width="33" height="32" viewBox="0 0 33 32"><rect class="ic" x="1.5" y="1.5" width="21" height="21" rx="6"/><rect x="10" y="9.5" width="21" height="21" rx="6" fill="#4a4848" stroke="#fff" stroke-width="2"/><path class="ic" d="M20.5 15.5 V24.5 M16 20 H25"/></svg>
<div class="top3" style="left:157.8px;top:76.0px"><span id="ddup">Duplicate</span></div>
<svg style="left:360.0px;top:33.0px" width="28" height="34" viewBox="0 0 28 34"><path class="ic" d="M14 1.5 V21.5 M7 8 L14 1.5 L21 8 M8 13.5 H6 a4.5 4.5 0 0 0 -4.5 4.5 V28 a4.5 4.5 0 0 0 4.5 4.5 H22 a4.5 4.5 0 0 0 4.5 -4.5 V18 a4.5 4.5 0 0 0 -4.5 -4.5 H20"/></svg>
<div class="top3" style="left:304.5px;top:76.5px"><span id="dshare">Share</span></div>
<i class="sep" style="top:136.0px"></i>
<svg style="left:31.0px;top:161.8px" width="29" height="32" viewBox="0 0 29 32"><path class="ic" d="M6.5 1.5 H21 L27 7 V25 a5 5 0 0 1 -5 5 H6.5 a5 5 0 0 1 -5 -5 V6.5 a5 5 0 0 1 5 -5 Z M8.5 1.5 V3.5 a3.5 3.5 0 0 0 3.5 3.5 H16.5 a3.5 3.5 0 0 0 3.5 -3.5 V1.5"/><circle class="ic" cx="14.3" cy="19" r="4.3"/></svg>
<div class="mi" id="dsaveas" style="top:164.2px">Save as...</div>
<i class="key" style="left:332.5px;top:164.8px;font-style:normal"><svg style="left:5.5px;top:6px" width="16" height="15" viewBox="0 0 16 15"><path d="M8 1.2 L14.8 8 H11 V13.8 H5 V8 H1.2 Z" fill="none" stroke="#828080" stroke-width="1.7" stroke-linejoin="round"/></svg></i>
<i class="key" style="left:366.0px;top:164.8px;font-style:normal"><svg style="left:5.5px;top:5.5px" width="16" height="16" viewBox="0 0 16 16"><path d="M5.5 5.5 H10.5 V10.5 H5.5 Z M5.5 5.5 V3.3 a2.2 2.2 0 1 0 -2.2 2.2 Z M10.5 5.5 H12.7 a2.2 2.2 0 1 0 -2.2 -2.2 Z M10.5 10.5 V12.7 a2.2 2.2 0 1 0 2.2 -2.2 Z M5.5 10.5 H3.3 a2.2 2.2 0 1 0 2.2 2.2 Z" fill="none" stroke="#828080" stroke-width="1.6" stroke-linejoin="round"/></svg></i>
<i class="key" style="left:400.0px;top:164.8px;font-style:normal">S</i>
<svg style="left:29.0px;top:228.0px" width="32" height="36" viewBox="0 0 32 36"><path class="ic" d="M8.5 9 V4.5 a3 3 0 0 1 3 -3 H20.5 a3 3 0 0 1 3 3 V9 M8 26 H6.5 a5 5 0 0 1 -5 -5 V14 a5 5 0 0 1 5 -5 H25.5 a5 5 0 0 1 5 5 V21 a5 5 0 0 1 -5 5 H24"/><rect class="ic" x="8.5" y="19.5" width="15" height="14.5" rx="2.5"/><path d="M20.5 14.5 H21.5 M24 14.5 H25" stroke="#fff" stroke-width="1.8" fill="none"/></svg>
<div class="mi" style="top:232.4px">Print...</div>
<i class="key" style="left:366.0px;top:232.8px;font-style:normal"><svg style="left:5.5px;top:5.5px" width="16" height="16" viewBox="0 0 16 16"><path d="M5.5 5.5 H10.5 V10.5 H5.5 Z M5.5 5.5 V3.3 a2.2 2.2 0 1 0 -2.2 2.2 Z M10.5 5.5 H12.7 a2.2 2.2 0 1 0 -2.2 -2.2 Z M10.5 10.5 V12.7 a2.2 2.2 0 1 0 2.2 -2.2 Z M5.5 10.5 H3.3 a2.2 2.2 0 1 0 2.2 2.2 Z" fill="none" stroke="#828080" stroke-width="1.6" stroke-linejoin="round"/></svg></i>
<i class="key" style="left:400.0px;top:232.8px;font-style:normal">P</i>
<i class="sep" style="top:286.7px"></i>
<svg style="left:31.0px;top:313.0px" width="29" height="33" viewBox="0 0 29 33"><path class="ic" d="M1.5 12 V7 a5.5 5.5 0 0 1 5.5 -5.5 H22 a5.5 5.5 0 0 1 5.5 5.5 V12 M1.5 26 a5.5 5.5 0 0 0 5.5 5.5 H22 a5.5 5.5 0 0 0 5.5 -5.5"/><text x="-2" y="24" font-family="Liberation Sans, sans-serif" font-weight="bold" font-size="11.5" fill="#fff" textLength="33" lengthAdjust="spacingAndGlyphs">PDF/A</text></svg>
<div class="mi" id="dpdfa" style="top:315.9px">Save as PDF/A...</div>
<svg style="left:31.0px;top:381.2px" width="29" height="33" viewBox="0 0 29 33"><path class="ic" d="M1.5 12 V7 a5.5 5.5 0 0 1 5.5 -5.5 H22 a5.5 5.5 0 0 1 5.5 5.5 V12 M1.5 26 a5.5 5.5 0 0 0 5.5 5.5 H22 a5.5 5.5 0 0 0 5.5 -5.5"/><text x="-2" y="24" font-family="Liberation Sans, sans-serif" font-weight="bold" font-size="11.5" fill="#fff" textLength="33" lengthAdjust="spacingAndGlyphs">PDF/X</text></svg>
<div class="mi" style="top:384.1px">Save as PDF/X...</div>
<svg style="left:31.0px;top:449.5px" width="29" height="33" viewBox="0 0 29 33"><path class="ic" d="M1.5 12 V7 a5.5 5.5 0 0 1 5.5 -5.5 H22 a5.5 5.5 0 0 1 5.5 5.5 V12 M1.5 26 a5.5 5.5 0 0 0 5.5 5.5 H22 a5.5 5.5 0 0 0 5.5 -5.5"/><text x="-2" y="24" font-family="Liberation Sans, sans-serif" font-weight="bold" font-size="11.5" fill="#fff" textLength="33" lengthAdjust="spacingAndGlyphs">PDF/E</text></svg>
<div class="mi" style="top:452.4px">Save as PDF/E...</div>
<svg style="left:31.0px;top:516.5px" width="31" height="35" viewBox="0 0 31 35"><path class="ic" d="M12 31.5 H7 a5.5 5.5 0 0 1 -5.5 -5.5 V7 A5.5 5.5 0 0 1 7 1.5 H22.5 A5.5 5.5 0 0 1 28 7 V15"/><path class="ic" style="stroke-width:1.8" d="M11.5 8.5 a2 2 0 1 0 .1 0 M11.5 12.5 C10 15 8.5 16 6.5 16.5 M11.5 12.5 C13.5 13.5 15.5 13.5 17 13"/><rect class="ic" x="15.5" y="19.5" width="14" height="13.5" rx="3.5"/><circle cx="19.8" cy="23.8" r="1.3" fill="#fff"/><path class="ic" style="stroke-width:1.8" d="M18 32 C19 28 23 26.5 29 26.5"/></svg>
<div class="mi" style="top:520.4px">Image PDF...</div>
<i class="sep" style="top:573.5px"></i>
<div class="mh" id="dcloud" style="top:602.5px">UPDF Cloud</div>
<svg style="left:28.0px;top:667.1px" width="34" height="35" viewBox="0 0 34 35"><path class="ic" d="M11 24.5 H9 a7.5 7.5 0 0 1 -1 -14.9 a8.5 8.5 0 0 1 16.5 -1.6 A8.3 8.3 0 0 1 25 24.5 H22 M16.5 33.5 V18 M11.5 22.5 L16.5 17.5 L21.5 22.5"/></svg>
<div class="mi" id="dcl" style="top:671.0px">Save to UPDF Cloud</div>
<i class="abs" style="left:14.7px;top:702.3px;width:417px;height:93px;border:8px solid #2aa64b;border-radius:2px"></i>
<svg style="left:28.0px;top:736.5px" width="34" height="33" viewBox="0 0 34 33"><g transform="rotate(-40 17 16.5)"><rect class="ic" x="-1" y="10" width="19" height="13" rx="6.5"/><rect class="ic" x="16" y="10" width="19" height="13" rx="6.5" /><path class="ic" d="M10 16.5 H24"/></g></svg>
<div class="mi" id="dshr" style="top:739.4px">UPDF Share</div>
<div class="mh" style="top:821.7px">Save as Other</div>
<svg style="left:30.0px;top:886.2px" width="31" height="35" viewBox="0 0 31 35"><path class="ic" d="M8.5 33 H6.5 a5 5 0 0 1 -5 -5 V6.5 a5 5 0 0 1 5 -5 H22.5 a5 5 0 0 1 5 5 V11 M7.5 8 L13.5 14 M13.5 9 V14 H8.5"/><rect class="ic" x="15.5" y="17.5" width="14" height="15.5" rx="4"/></svg>
<div class="mi" id="dred" style="top:890.1px">Reduce File Size...</div>
<svg style="left:29.0px;top:955.0px" width="35" height="34" viewBox="0 0 35 34"><path class="ic" d="M15 32 C7 29 2.5 23 2 14 V6 C7 5.5 11 4 15 1.5 C19 4 23 5.5 28 6 V14 M15 1.5 V32"/><rect class="ic" x="19.5" y="22" width="14" height="11" rx="3"/><path class="ic" d="M23 22 V19.5 a3.5 3.5 0 0 1 7 0 V22"/></svg>
<div class="mi" id="dprot" style="top:958.4px">Protect Using Password...</div>
<svg style="left:28.5px;top:1022.5px" width="34" height="36" viewBox="0 0 34 36"><path class="ic" d="M17 1 V12.5 M12 8 L17 13 L22 8 M9.5 14 L2 18 L17 26 L32 18 L24.5 14 M2 26 L17 34 L32 26 L27 23.3 M2 26 L7 23.3"/></svg>
<div class="mi" id="dflat" style="top:1026.9px">Save as Flatten...</div>
</div>
</div>
</body>
</html>
